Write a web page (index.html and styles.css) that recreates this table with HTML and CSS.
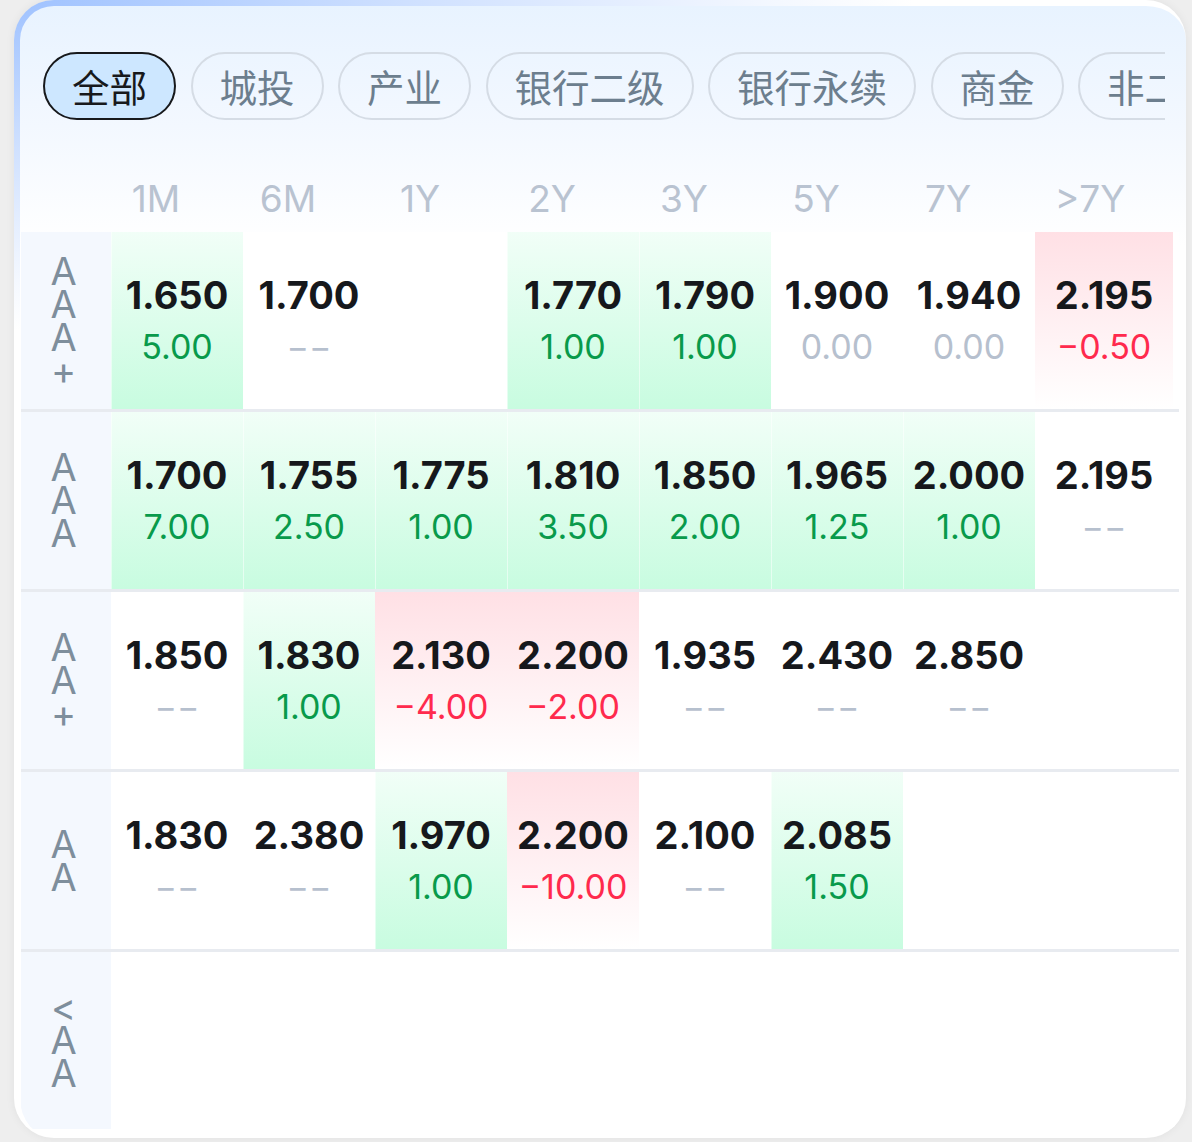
FILE: index.html
```html
<!DOCTYPE html>
<html lang="zh">
<head>
<meta charset="utf-8">
<link rel="stylesheet" href="styles.css">
</head>
<body>
<div class="card">
  <div class="chips">
    <span class="chip active">全部</span>
    <span class="chip">城投</span>
    <span class="chip">产业</span>
    <span class="chip">银行二级</span>
    <span class="chip">银行永续</span>
    <span class="chip">商金</span>
    <span class="chip">非二永</span>
  </div>
  <div class="head">
    <span>1M</span><span>6M</span><span>1Y</span><span>2Y</span><span>3Y</span><span>5Y</span><span>7Y</span><span>&gt;7Y</span>
  </div>
  <div class="table">
    <div class="row">
      <div class="lbl"><span>AAA+</span></div>
      <div class="cell up"><b>1.650</b><i class="g">5.00</i></div>
      <div class="cell"><b>1.700</b><i class="n">−−</i></div>
      <div class="cell"></div>
      <div class="cell up"><b>1.770</b><i class="g">1.00</i></div>
      <div class="cell up"><b>1.790</b><i class="g">1.00</i></div>
      <div class="cell"><b>1.900</b><i class="n">0.00</i></div>
      <div class="cell"><b>1.940</b><i class="n">0.00</i></div>
      <div class="cell down"><b>2.195</b><i class="r">−0.50</i></div>
    </div>
    <div class="row">
      <div class="lbl"><span>AAA</span></div>
      <div class="cell up"><b>1.700</b><i class="g">7.00</i></div>
      <div class="cell up"><b>1.755</b><i class="g">2.50</i></div>
      <div class="cell up"><b>1.775</b><i class="g">1.00</i></div>
      <div class="cell up"><b>1.810</b><i class="g">3.50</i></div>
      <div class="cell up"><b>1.850</b><i class="g">2.00</i></div>
      <div class="cell up"><b>1.965</b><i class="g">1.25</i></div>
      <div class="cell up"><b>2.000</b><i class="g">1.00</i></div>
      <div class="cell"><b>2.195</b><i class="n">−−</i></div>
    </div>
    <div class="row">
      <div class="lbl"><span>AA+</span></div>
      <div class="cell"><b>1.850</b><i class="n">−−</i></div>
      <div class="cell up"><b>1.830</b><i class="g">1.00</i></div>
      <div class="cell down"><b>2.130</b><i class="r">−4.00</i></div>
      <div class="cell down"><b>2.200</b><i class="r">−2.00</i></div>
      <div class="cell"><b>1.935</b><i class="n">−−</i></div>
      <div class="cell"><b>2.430</b><i class="n">−−</i></div>
      <div class="cell"><b>2.850</b><i class="n">−−</i></div>
      <div class="cell"></div>
    </div>
    <div class="row">
      <div class="lbl"><span>AA</span></div>
      <div class="cell"><b>1.830</b><i class="n">−−</i></div>
      <div class="cell"><b>2.380</b><i class="n">−−</i></div>
      <div class="cell up"><b>1.970</b><i class="g">1.00</i></div>
      <div class="cell down"><b>2.200</b><i class="r">−10.00</i></div>
      <div class="cell"><b>2.100</b><i class="n">−−</i></div>
      <div class="cell up"><b>2.085</b><i class="g">1.50</i></div>
      <div class="cell"></div>
      <div class="cell"></div>
    </div>
    <div class="row last">
      <div class="lbl"><span>&lt;AA</span></div>
      <div class="cell"></div>
      <div class="cell"></div>
      <div class="cell"></div>
      <div class="cell"></div>
      <div class="cell"></div>
      <div class="cell"></div>
      <div class="cell"></div>
      <div class="cell"></div>
    </div>
  </div>
</div>
</body>
</html>
```

FILE: styles.css
```css
html, body {
  margin: 0;
  padding: 0;
}
body {
  background: #eeeeee;
  font-family: Inter, "Noto Sans", "Noto Sans CJK SC", sans-serif;
  width: 1192px;
  height: 1142px;
  overflow: hidden;
}
.card {
  box-sizing: border-box;
  margin-left: 14px;
  width: 1172px;
  height: 1138px;
  border-top: 6px solid transparent;
  border-left: 6px solid transparent;
  border-radius: 40px;
  background:
    linear-gradient(180deg, #e8f3ff 0px, #f3f8ff 120px, #ffffff 240px) padding-box,
    radial-gradient(ellipse 900px 330px at 0 0, #9fc2ff 0%, #d0e1ff 45%, #f4f8ff 85%, #ffffff 100%) border-box;
  box-shadow: 0 0 10px rgba(0, 0, 0, 0.06);
  overflow: hidden;
  padding-top: 46px;
}
.chips {
  display: flex;
  gap: 14.5px;
  margin-left: 23px;
  width: 1122px;
  overflow: hidden;
  white-space: nowrap;
}
.chip {
  flex: none;
  box-sizing: border-box;
  height: 68px;
  line-height: 63px;
  padding: 0 27px;
  border: 2.5px solid #d5dce5;
  border-radius: 34px;
  font-family: "Noto Sans CJK SC", sans-serif;
  font-size: 37.5px;
  color: #6c7e8e;
}
.chip.active {
  border-color: #17191c;
  background: #cde7ff;
  color: #17191c;
}
.head {
  box-sizing: border-box;
  height: 112px;
  padding: 57px 0 11px 70px;
  display: grid;
  grid-template-columns: repeat(7, 132px) 152px;
  font-size: 37px;
  line-height: 44px;
  color: #b9c3d1;
  text-align: center;
}
.table {
  margin-left: 1px;
  width: 1158px;
}
.row {
  display: grid;
  grid-template-columns: 90px repeat(7, 132px) 138px;
  height: 180px;
  box-sizing: border-box;
  border-bottom: 3px solid #e8ebf0;
  background: #ffffff;
}
.row.last {
  border-bottom: none;
  height: 177px;
}
.lbl {
  background: #f4f8fe;
  display: flex;
  align-items: center;
  justify-content: center;
  padding-right: 5px;
}
.lbl span {
  width: 30px;
  word-break: break-all;
  text-align: center;
  font-size: 38px;
  line-height: 33px;
  color: #7e8e9c;
}
.cell {
  display: flex;
  flex-direction: column;
  align-items: center;
  justify-content: center;
  gap: 6px;
  padding-bottom: 2px;
}
.cell.up {
  background: linear-gradient(180deg, rgba(200, 252, 224, 0.25) 0%, #c8fce0 100%);
  box-shadow: inset 1px 0 0 rgba(255, 255, 255, 0.5);
}
.cell.down {
  background: linear-gradient(180deg, #ffe0e5 0%, rgba(255, 224, 229, 0) 100%);
}
.cell b {
  font-size: 38px;
  line-height: 48px;
  font-weight: 700;
  color: #16181c;
}
.cell i {
  font-style: normal;
  font-size: 34px;
  line-height: 44px;
}
.g { color: #089a4b; }
.r { color: #ff2a4d; }
.n { color: #b6c0ce; }
```
